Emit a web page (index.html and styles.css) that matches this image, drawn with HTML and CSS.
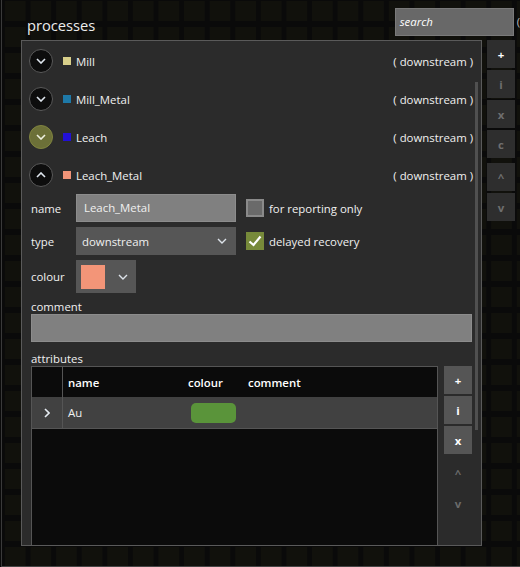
FILE: index.html
```html
<!DOCTYPE html>
<html>
<head>
<meta charset="utf-8">
<link rel="stylesheet" href="styles.css">
</head>
<body>
<div class="app">
  <div class="top">
    <div class="title">processes</div>
    <div class="search">search</div>
    <div class="cut">(</div>
  </div>
  <div class="main">
    <div class="panel">
      <div class="content">
        <div class="proc">
          <span class="tog"><svg viewBox="0 0 10 6"><polyline points="1,1 5,5 9,1" fill="none" stroke="#dfe6ee" stroke-width="1.6"/></svg></span>
          <span class="sw sw-mill"></span><span class="pname">Mill</span><span class="ptype">( downstream )</span>
        </div>
        <div class="proc">
          <span class="tog"><svg viewBox="0 0 10 6"><polyline points="1,1 5,5 9,1" fill="none" stroke="#dfe6ee" stroke-width="1.6"/></svg></span>
          <span class="sw sw-millmetal"></span><span class="pname">Mill_Metal</span><span class="ptype">( downstream )</span>
        </div>
        <div class="proc">
          <span class="tog tog-active"><svg viewBox="0 0 10 6"><polyline points="1,1 5,5 9,1" fill="none" stroke="#eef0e0" stroke-width="1.6"/></svg></span>
          <span class="sw sw-leach"></span><span class="pname">Leach</span><span class="ptype">( downstream )</span>
        </div>
        <div class="proc">
          <span class="tog"><svg viewBox="0 0 10 6"><polyline points="1,5 5,1 9,5" fill="none" stroke="#dfe6ee" stroke-width="1.6"/></svg></span>
          <span class="sw sw-leachmetal"></span><span class="pname">Leach_Metal</span><span class="ptype">( downstream )</span>
        </div>

        <div class="details">
          <div class="frow">
            <span class="flabel">name</span>
            <div class="input">Leach_Metal</div>
            <span class="cb"></span><span class="cbl">for reporting only</span>
          </div>
          <div class="frow">
            <span class="flabel">type</span>
            <div class="select"><span>downstream</span><svg class="chev" viewBox="0 0 10 6"><polyline points="1,1 5,5 9,1" fill="none" stroke="#dde3ea" stroke-width="1.4"/></svg></div>
            <span class="cb cb-on"><svg viewBox="0 0 18 18"><polyline points="3.5,9.5 7.5,13 14.5,4.5" fill="none" stroke="#ffffff" stroke-width="2.2"/></svg></span><span class="cbl">delayed recovery</span>
          </div>
          <div class="frow frow-colour">
            <span class="flabel">colour</span>
            <div class="cpick"><span class="cswatch"></span><svg class="chev" viewBox="0 0 10 6"><polyline points="1,1 5,5 9,1" fill="none" stroke="#dde3ea" stroke-width="1.4"/></svg></div>
          </div>
          <div class="slabel slabel-comment">comment</div>
          <div class="textarea"></div>
          <div class="slabel slabel-attr">attributes</div>
          <div class="tarea">
            <div class="table">
              <div class="trow thead">
                <span class="c0"></span><span class="c1">name</span><span class="c2">colour</span><span class="c3">comment</span>
              </div>
              <div class="trow tbody">
                <span class="c0"><svg viewBox="0 0 6 10"><polyline points="1,1 5,5 1,9" fill="none" stroke="#e6ecf2" stroke-width="1.6"/></svg></span><span class="c1">Au</span><span class="c2"><span class="pill"></span></span><span class="c3"></span>
              </div>
            </div>
            <div class="tbtns">
              <div class="tbtn">+</div>
              <div class="tbtn">i</div>
              <div class="tbtn">x</div>
              <div class="tbtn plain up">^</div>
              <div class="tbtn plain down">v</div>
            </div>
          </div>
        </div>
      </div>
      <div class="sbar"><div class="thumb"></div></div>
    </div>
    <div class="side">
      <div class="sbtn sbtn-add">+</div>
      <div class="sbtn">i</div>
      <div class="sbtn">x</div>
      <div class="sbtn">c</div>
      <div class="sbtn sbtn-gap">^</div>
      <div class="sbtn">v</div>
    </div>
  </div>
</div>
</body>
</html>
```
FILE: styles.css
```css
* { box-sizing: border-box; }
html, body { margin: 0; padding: 0; background: #0a0a0a; }
body {
  font-family: "Open Sans", "Noto Sans", sans-serif;
  font-size: 11.4px;
  color: #f0f0f0;
}
.app {
  width: 519px;
  height: 567px;
  margin-left: 1px;
  border-left: 1px solid #3a3a3a;
  border-bottom: 1px solid #464646;
  overflow: hidden;
  background-color: #0a0a0a;
  background-image:
    linear-gradient(to right, #0a0a0a 5px, transparent 5px),
    linear-gradient(to bottom, #0a0a0a 6px, transparent 6px),
    linear-gradient(#11110c, #11110c);
  background-size: 25.6px 26px;
  background-position: -2px 21px;
}
.top { display: flex; height: 40px; }
.title {
  margin: 15px 0 0 25px;
  font-size: 14.7px;
  line-height: 20px;
  color: #ececec;
}
.search {
  margin: 8px 0 0 auto;
  width: 119px;
  height: 28px;
  background: #686868;
  border: 1px solid #7a7a7a;
  font-style: italic;
  padding-left: 4px;
  line-height: 26px;
  color: #ffffff;
}
.cut {
  flex: 0 0 3px;
  margin: 14px 0 0 3px;
  line-height: 16px;
  color: #bbbbbb;
  white-space: nowrap;
}
.main { display: flex; gap: 5px; margin-left: 19px; }
.panel {
  width: 461px;
  height: 506px;
  flex: 0 0 461px;
  border: 1px solid #5a5a5a;
  background: #2b2b2b;
  display: flex;
  overflow: hidden;
}
.content { flex: 1; min-width: 0; padding-top: 1px; }
.sbar { flex: 0 0 7px; padding-left: 1px; }
.thumb { width: 3px; margin-top: 41px; height: 348px; background: #505050; }

.proc { display: flex; align-items: center; height: 38px; padding-left: 7px; }
.tog {
  width: 24px; height: 24px; border-radius: 50%;
  background: #0d0d0d; border: 1px solid #5a5a5a;
  display: flex; align-items: center; justify-content: center;
}
.tog svg { width: 10px; height: 6px; display: block; }
.tog-active { background: #6c7038; border-color: #80843f; }
.sw { width: 8px; height: 8px; margin-left: 10px; }
.sw-mill { background: #d8cf8a; }
.sw-millmetal { background: #1e79a8; }
.sw-leach { background: #2210d6; }
.sw-leachmetal { background: #f09478; }
.pname { margin-left: 5px; }
.ptype { margin-left: auto; margin-right: 1px; }

.details { padding: 0 2px 0 9px; }
.frow { display: flex; align-items: center; height: 28px; margin-top: 5px; }
.frow:first-child { margin-top: 0; }
.frow-colour { height: 33px; }
.flabel { width: 45px; flex: 0 0 45px; }
.input {
  width: 160px; height: 28px;
  background: #808080; border: 1px solid #8c8c8c;
  padding-left: 7px; line-height: 26px;
}
.select {
  width: 160px; height: 28px; background: #565656;
  display: flex; align-items: center; padding: 0 9px 0 6px;
}
.select .chev { margin-left: auto; }
.chev { width: 10px; height: 6px; display: block; }
.cb {
  width: 18px; height: 18px; margin-left: 10px;
  background: #6a6a6a; border: 2px solid #8a8a8a;
}
.cb-on { background: #778a3a; border: none; }
.cb-on svg { width: 18px; height: 18px; display: block; }
.cbl { margin-left: 5px; }
.cpick {
  width: 60px; height: 33px; background: #565656;
  display: flex; align-items: center; padding-left: 5px;
}
.cswatch { width: 24px; height: 24px; background: #f39578; }
.cpick .chev { margin-left: 13px; }
.slabel { line-height: 14px; }
.slabel-comment { margin-top: 7px; }
.slabel-attr { margin-top: 10px; }
.textarea {
  height: 28px; width: 441px;
  background: #808080; border: 1px solid #8c8c8c;
}
.tarea { display: flex; gap: 6px; height: 200px; }
.table {
  width: 407px; height: 200px;
  background: #0b0b0b; border: 1px solid #555555;
}
.trow {
  display: grid;
  grid-template-columns: 31px 125px 60px 1fr;
  align-items: center;
}
.trow > span { height: 100%; display: flex; align-items: center; }
.thead { height: 30px; font-weight: 600; color: #ffffff; }
.tbody { height: 32px; background: #414141; border-bottom: 1px solid #555555; }
.c0 { border-right: 1px solid #555555; justify-content: center; }
.c0 svg { width: 6px; height: 10px; display: block; }
.c1 { padding-left: 5px; }
.pill { width: 45px; height: 20px; margin-left: 3px; border-radius: 5px; background: #5a943a; }
.tbtns { display: flex; flex-direction: column; gap: 2px; width: 28px; }
.tbtn {
  height: 28px; background: #555555; color: #ffffff; font-weight: 700;
  display: flex; align-items: center; justify-content: center;
}
.tbtn.plain { background: none; color: #6a6a6a; }
.tbtn.up { margin-top: 3px; }
.side { display: flex; flex-direction: column; gap: 2px; width: 28px; }
.sbtn {
  height: 28px; background: #2e2e2e; color: #6e6e6e; font-weight: 700;
  display: flex; align-items: center; justify-content: center;
}
.sbtn-add { color: #ffffff; }
.sbtn-gap { margin-top: 3px; }
```
